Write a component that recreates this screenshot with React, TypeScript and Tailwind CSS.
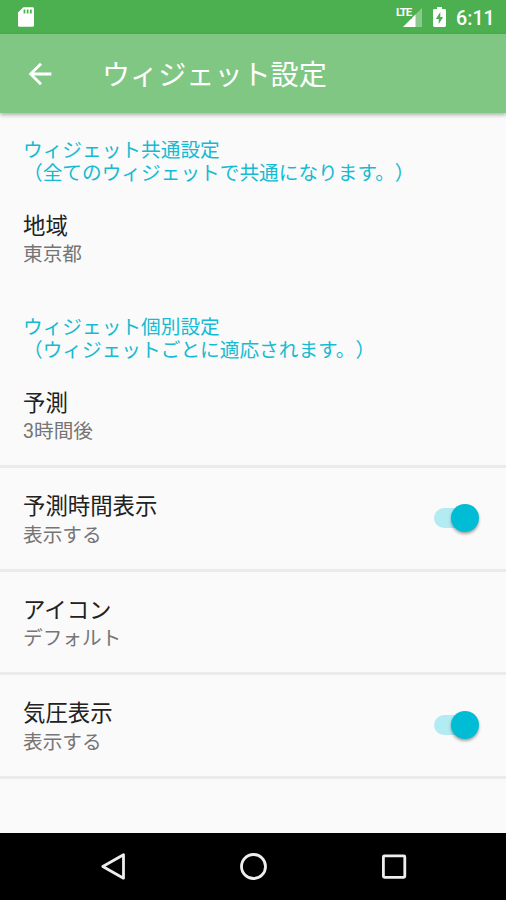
import type { ReactNode } from "react";

function StatusBar() {
  return (
    <div className="flex h-[34px] shrink-0 items-center bg-[#4caf50]">
      <svg className="ml-[17px]" width="18" height="22" viewBox="0 0 18 22">
        <path
          fill="#fff"
          fillRule="evenodd"
          d="M6.4 1.2H15.6A1.4 1.4 0 0 1 17 2.6V19.4A1.4 1.4 0 0 1 15.6 20.8H2.4A1.4 1.4 0 0 1 1 19.4V6.6ZM6.6 3.6V7.4H8.3V3.6ZM9.8 3.6V7.4H11.5V3.6ZM13 3.6V7.4H14.7V3.6Z"
        />
      </svg>
      <div className="relative ml-auto h-[22px] w-[28px]">
        <svg width="28" height="22" viewBox="0 0 28 22">
          <path d="M26 2V21H7Z" fill="#fff" opacity=".35" />
          <path d="M19.5 8.5V21H7Z" fill="#fff" />
        </svg>
        <span className="absolute left-0 top-[1px] rounded-[1px] bg-[#4caf50] pb-[1px] pr-[1px] text-[11.5px] font-bold leading-[11px] tracking-[-1.2px] text-white">
          LTE
        </span>
      </div>
      <svg className="ml-[8px]" width="15" height="22" viewBox="0 0 15 22">
        <path
          fill="#fff"
          fillRule="evenodd"
          d="M5 1H10V3H12.6A1.4 1.4 0 0 1 14 4.4V19.6A1.4 1.4 0 0 1 12.6 21H2.4A1.4 1.4 0 0 1 1 19.6V4.4A1.4 1.4 0 0 1 2.4 3H5ZM8.3 6L3.8 13H6.7V18L11.2 11H8.3Z"
        />
      </svg>
      <span className="ml-[9px] mr-[11px] mt-[4px] w-[39px] whitespace-nowrap text-[19.7px] font-medium leading-none text-white">
        6:11
      </span>
    </div>
  );
}

function Toolbar() {
  return (
    <header className="relative z-10 flex h-[79px] shrink-0 items-center bg-[#81c784] shadow-[0_2px_4px_rgba(0,0,0,0.3)]">
      <svg className="ml-[23px] shrink-0" width="34" height="34" viewBox="0 0 24 24">
        <path fill="#fff" d="M20 11H7.83l5.59-5.59L12 4l-8 8 8 8 1.41-1.41L7.83 13H20v-2z" />
      </svg>
      <h1 className="ml-[45px] mt-[5px] whitespace-nowrap text-[28.1px] leading-[40px] text-white">ウィジェット設定</h1>
    </header>
  );
}

function Category({ lines }: { lines: string[] }) {
  return (
    <div className="h-[73.5px] shrink-0 pl-[23px] pt-[25px] text-[19.68px] leading-[23px] text-[#14bbd2]">
      {lines.map((line) => (
        <p key={line} className="whitespace-nowrap">
          {line}
        </p>
      ))}
    </div>
  );
}

function Toggle() {
  return (
    <div className="relative mr-[27px] mt-[35px] h-[30px] w-[45px]">
      <div className="absolute left-0 top-[5px] h-[20px] w-[38px] rounded-full bg-[#b2ebf2]" />
      <div className="absolute right-0 top-[1px] size-[28px] rounded-full bg-[#00bcd4] shadow-[0_2px_3px_rgba(0,0,0,0.35)]" />
    </div>
  );
}

function Preference({
  title,
  summary,
  divider = true,
  children,
}: {
  title: string;
  summary: string;
  divider?: boolean;
  children?: ReactNode;
}) {
  return (
    <div
      className={`flex h-[103.5px] shrink-0 justify-between border-b-[3px] ${
        divider ? "border-[#ebebeb]" : "border-transparent"
      }`}
    >
      <div className="pl-[23px] pt-[24px]">
        <p className="text-[22.4px] leading-[29px] text-[#212121]">{title}</p>
        <p className="mt-[2.5px] text-[19.65px] leading-[23px] text-[#757575]">{summary}</p>
      </div>
      {children}
    </div>
  );
}

function NavigationBar() {
  return (
    <nav className="flex h-[67px] shrink-0 items-center justify-center bg-black">
      <svg width="506" height="67" viewBox="0 0 506 67" fill="none" stroke="#eee" strokeWidth="2.8">
        <path d="M123.5 21.7V45.2L102.8 33.5Z" strokeLinejoin="round" />
        <circle cx="253.5" cy="33.5" r="12" />
        <rect x="383.4" y="22.9" width="21.4" height="21.4" rx="1" />
      </svg>
    </nav>
  );
}

export default function App() {
  return (
    <div className="flex h-[900px] w-[506px] flex-col overflow-hidden bg-[#fafafa] font-[Roboto,'Noto_Sans_CJK_JP',sans-serif] [text-spacing-trim:space-all]">
      <StatusBar />
      <Toolbar />
      <main className="flex min-h-0 flex-1 flex-col pt-[1px]">
        <Category lines={["ウィジェット共通設定", "（全てのウィジェットで共通になります。）"]} />
        <Preference title="地域" summary="東京都" divider={false} />
        <Category lines={["ウィジェット個別設定", "（ウィジェットごとに適応されます。）"]} />
        <Preference title="予測" summary="3時間後" />
        <Preference title="予測時間表示" summary="表示する">
          <Toggle />
        </Preference>
        <Preference title="アイコン" summary="デフォルト" />
        <Preference title="気圧表示" summary="表示する">
          <Toggle />
        </Preference>
      </main>
      <NavigationBar />
    </div>
  );
}
